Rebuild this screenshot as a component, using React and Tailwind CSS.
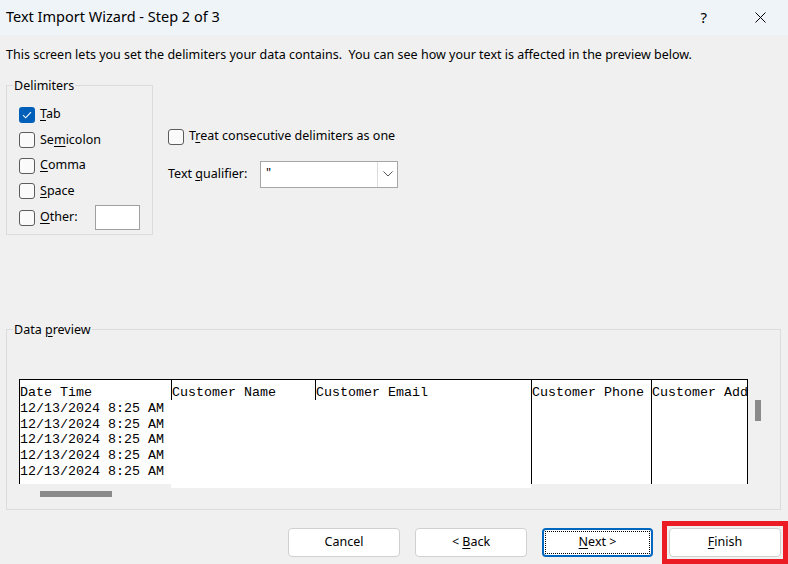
import React from "react";

const UI = { fontFamily: '"Noto Sans", "Open Sans", sans-serif' };
const MONO = { fontFamily: '"Liberation Mono", "Courier New", monospace' };

function Box({ checked }) {
  return checked ? (
    <span className="w-[16px] h-[16px] rounded-[3px] bg-[#005fb8] flex items-center justify-center shrink-0">
      <svg width="10" height="8" viewBox="0 0 10 8" fill="none">
        <path d="M1 4.2 L3.7 6.8 L9 1.2" stroke="white" strokeWidth="1.1" />
      </svg>
    </span>
  ) : (
    <span className="w-[16px] h-[16px] rounded-[3px] border border-[#5c5c5c] bg-[#fafafa] shrink-0" />
  );
}

function Check({ checked, pre, u, post, h = "h-[25.5px]" }) {
  return (
    <div className={`flex items-center ${h} gap-[5px]`}>
      <Box checked={checked} />
      <span className="text-[12.5px] text-black whitespace-pre">
        {pre}
        <span className="underline underline-offset-2">{u}</span>
        {post}
      </span>
    </div>
  );
}

function Btn({ children, focused }) {
  if (focused) {
    return (
      <div className="w-[111px] h-[29px] rounded-[4px] border-2 border-[#0067c0] bg-white p-[1px]">
        <div className="w-full h-full border border-dotted border-black flex items-center justify-center text-[12.5px] text-black">
          <span className="whitespace-pre">{children}</span>
        </div>
      </div>
    );
  }
  return (
    <div className="w-[112px] h-[29px] rounded-[4px] border border-[#d0d0d0] bg-white flex items-center justify-center text-[12.5px] text-black">
      <span className="whitespace-pre">{children}</span>
    </div>
  );
}

const rows = Array.from({ length: 5 }, () => "12/13/2024 8:25 AM");

export default function App() {
  return (
    <div className="w-[788px] h-[564px] bg-[#f0f0f0] overflow-hidden flex flex-col" style={UI}>
      {/* title bar */}
      <div className="h-[35px] bg-[#eff4f9] flex items-center shrink-0">
        <span className="ml-[6px] mb-[1px] text-[14.5px] text-black">Text Import Wizard - Step 2 of 3</span>
        <span className="ml-auto mb-[1px] text-[15px] text-black">?</span>
        <span className="ml-[48px] mr-[22px] flex items-center">
          <svg width="11" height="11" viewBox="0 0 11 11">
            <path d="M0.5 0.5 L10.5 10.5 M10.5 0.5 L0.5 10.5" stroke="black" strokeWidth="1" />
          </svg>
        </span>
      </div>

      {/* description */}
      <div className="mt-[11px] ml-[6px] h-[17px] leading-[17px] text-[12.5px] text-black whitespace-pre">
        {"This screen lets you set the delimiters your data contains.  You can see how your text is affected in the preview below."}
      </div>

      {/* top options */}
      <div className="mt-[13px] flex h-[159px]">
        <fieldset className="ml-[6px] w-[147px] h-[159px] border border-[#dcdcdc]">
          <legend className="ml-[6px] px-[1px] pt-[2px] text-[12.5px] leading-[16px] text-black">Delimiters</legend>
          <div className="pl-[12px] pt-[8px] flex flex-col">
            <Check checked pre="" u="T" post="ab" />
            <Check pre="Se" u="m" post="icolon" />
            <Check pre="" u="C" post="omma" />
            <Check pre="" u="S" post="pace" />
            <div className="flex items-center h-[27px]">
              <div className="w-[76px] shrink-0">
                <Check pre="" u="O" post="ther:" />
              </div>
              <div className="w-[45px] h-[25px] bg-white border border-[#a0a0a0]" />
            </div>
          </div>
        </fieldset>

        <div className="ml-[15px] flex flex-col">
          <div className="mt-[48px]">
            <Check pre="T" u="r" post="eat consecutive delimiters as one" />
          </div>
          <div className="mt-[11px] flex items-center">
            <span className="text-[12.5px] text-black w-[92px]">
              Text <span className="underline underline-offset-2">q</span>ualifier:
            </span>
            <div className="w-[138px] h-[27px] bg-white border border-[#a6a6a6] flex">
              <span className="flex-1 pl-[5px] text-[12.5px] leading-[22px] text-black">"</span>
              <span className="w-[20px] border-l border-[#dcdcdc] flex items-center justify-center">
                <svg width="10" height="6" viewBox="0 0 10 6" fill="none">
                  <path d="M0.5 0.5 L5 5 L9.5 0.5" stroke="#555" strokeWidth="1" />
                </svg>
              </span>
            </div>
          </div>
        </div>
      </div>

      {/* data preview */}
      <fieldset className="mt-[85px] ml-[6px] w-[775px] h-[190px] border border-[#dcdcdc]">
        <legend className="ml-[6px] px-[1px] pt-[2px] text-[12.5px] leading-[16px] text-black">
          Data <span className="underline underline-offset-2">p</span>review
        </legend>
        <div className="pl-[12px] mt-[41px] flex items-start">
          <div className="flex flex-col">
            <div className="flex items-start border-t border-black text-[13.33px] leading-[15.8px] text-black" style={MONO}>
              <div className="w-[152px] h-[104px] bg-white border-l border-black pt-[5px] whitespace-pre">
                <div>Date Time</div>
                {rows.map((r, i) => (
                  <div key={i}>{r}</div>
                ))}
              </div>
              <div className="w-[144px] h-[108px] bg-white">
                <div className="border-l border-black h-[20px] pt-[5px] whitespace-pre">Customer Name</div>
              </div>
              <div className="w-[216px] h-[108px] bg-white">
                <div className="border-l border-black h-[20px] pt-[5px] whitespace-pre">Customer Email</div>
              </div>
              <div className="w-[120px] h-[104px] bg-white border-l border-black pt-[5px] whitespace-pre">Customer Phone</div>
              <div className="w-[97px] h-[104px] bg-white border-l border-r border-black pt-[5px] whitespace-pre overflow-hidden">Customer Add</div>
            </div>
            <div className="ml-[21px] mt-[3px] w-[72px] h-[6px] bg-[#8a8a8a]" />
          </div>
          <div className="ml-[7px] mt-[21px] w-[6px] h-[21px] bg-[#8a8a8a]" />
        </div>
      </fieldset>

      {/* buttons */}
      <div className="mt-[11px] flex items-center">
        <div className="ml-[288px]">
          <Btn>Cancel</Btn>
        </div>
        <div className="ml-[15px]">
          <Btn>
            {"< "}<span className="underline underline-offset-2">B</span>ack
          </Btn>
        </div>
        <div className="ml-[15px]">
          <Btn focused>
            <span className="underline underline-offset-2">N</span>{"ext >"}
          </Btn>
        </div>
        <div className="ml-[9px] border-[5px] border-[#ec1c24] p-[2px]">
          <Btn>
            <span className="underline underline-offset-2">F</span>inish
          </Btn>
        </div>
      </div>
    </div>
  );
}
